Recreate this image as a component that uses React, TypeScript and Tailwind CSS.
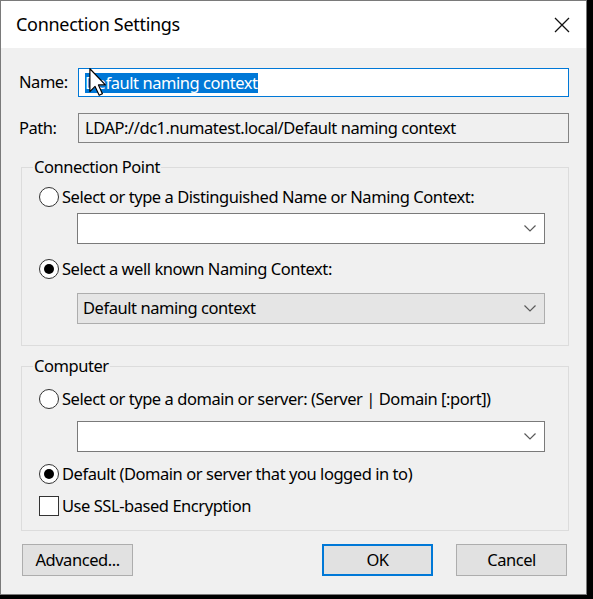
import React from "react";

const font = { fontFamily: '"Noto Sans", "Open Sans", sans-serif' };

const Chevron = () => (
  <svg width="12" height="7" viewBox="0 0 12 7" className="shrink-0">
    <path d="M0.5 0.5 L6 6 L11.5 0.5" fill="none" stroke="#5a5a5a" strokeWidth="1.2" />
  </svg>
);

const Radio = ({ checked, label }: { checked?: boolean; label: string }) => (
  <div className="flex items-center h-[24px] pl-[17px]">
    <div className="w-[20px] h-[20px] rounded-full border border-[#333] bg-white flex items-center justify-center shrink-0">
      {checked && <div className="w-[10px] h-[10px] rounded-full bg-black" />}
    </div>
    <span className="ml-[3px] whitespace-nowrap">{label}</span>
  </div>
);

const Combo = ({ value, disabled }: { value?: string; disabled?: boolean }) => (
  <div
    className={
      disabled
        ? "ml-[55px] w-[468px] h-[31px] border border-[#adadad] bg-[#e5e5e5] flex items-center pl-[5px] pr-[8px]"
        : "ml-[55px] w-[468px] h-[31px] border border-[#7a7a7a] bg-white flex items-center pl-[5px] pr-[8px]"
    }
  >
    <span className="flex-1 whitespace-nowrap">{value}</span>
    <Chevron />
  </div>
);

export default function App() {
  return (
    <div className="w-[593px] h-[599px] bg-black overflow-hidden text-black" style={font}>
      <div className="w-[587px] h-[595px] border border-[#7a7a7a] bg-[#f0f0f0] flex flex-col text-[16.5px] tracking-[-0.45px]">
        {/* title bar */}
        <div className="h-[47px] bg-white flex items-center pl-[15px] pr-[16px] shrink-0">
          <span className="flex-1 text-[18px] tracking-[-0.3px]">Connection Settings</span>
          <svg width="16" height="16" viewBox="0 0 16 16">
            <path d="M1 1 L15 15 M15 1 L1 15" stroke="#111" strokeWidth="1.3" />
          </svg>
        </div>

        {/* name */}
        <div className="flex items-center mt-[20px] pl-[18px]">
          <span className="w-[59px]">Name:</span>
          <div className="relative w-[491px] h-[29px] border border-[#0078d7] bg-white flex items-center pl-[6px]">
            <span className="bg-[#0078d7] text-white leading-[20px] whitespace-nowrap">Default naming context</span>
            <svg
              width="18"
              height="28"
              viewBox="0 0 12 19"
              className="absolute left-[10px] top-[-1px]"
            >
              <path d="M0.5 0.5 L0.5 16 L4 12.5 L6.8 18.5 L9 17.5 L6.3 11.5 L11 11.5 Z" fill="#fff" stroke="#000" strokeWidth="0.8" strokeLinejoin="round" />
            </svg>
          </div>
        </div>

        {/* path */}
        <div className="flex items-center mt-[16px] pl-[18px]">
          <span className="w-[59px]">Path:</span>
          <div className="w-[491px] h-[30px] border border-[#838383] bg-[#f0f0f0] flex items-center pl-[6px] whitespace-nowrap">
            LDAP://dc1.numatest.local/Default naming context
          </div>
        </div>

        {/* connection point */}
        <fieldset className="mt-[13px] ml-[20px] w-[548px] border border-[#dcdcdc] pb-[21px]">
          <legend className="ml-[11px] px-[1px] leading-[22px]">Connection Point</legend>
          <div className="mt-[7px]">
            <Radio label="Select or type a Distinguished Name or Naming Context:" />
          </div>
          <div className="mt-[4px]">
            <Combo />
          </div>
          <div className="mt-[13px]">
            <Radio checked label="Select a well known Naming Context:" />
          </div>
          <div className="mt-[12px]">
            <Combo disabled value="Default naming context" />
          </div>
        </fieldset>

        {/* computer */}
        <fieldset className="mt-[9px] ml-[20px] w-[548px] border border-[#dcdcdc] pb-[12px]">
          <legend className="ml-[11px] px-[1px] leading-[22px]">Computer</legend>
          <div className="mt-[10px]">
            <Radio label="Select or type a domain or server: (Server | Domain [:port])" />
          </div>
          <div className="mt-[10px]">
            <Combo />
          </div>
          <div className="mt-[10px]">
            <Radio checked label="Default (Domain or server that you logged in to)" />
          </div>
          <div className="mt-[8px] flex items-center h-[24px] pl-[17px]">
            <div className="w-[20px] h-[20px] border border-[#333] bg-white shrink-0" />
            <span className="ml-[3px]">Use SSL-based Encryption</span>
          </div>
        </fieldset>

        {/* buttons */}
        <div className="flex mt-[13px] pl-[21px] pr-[19px]">
          <button className="w-[111px] h-[32px] border border-[#adadad] bg-[#e1e1e1]">Advanced...</button>
          <button className="ml-auto w-[111px] h-[32px] border-2 border-[#0078d7] bg-[#e1e1e1]">OK</button>
          <button className="ml-[23px] w-[111px] h-[32px] border border-[#adadad] bg-[#e1e1e1]">Cancel</button>
        </div>
      </div>
    </div>
  );
}
